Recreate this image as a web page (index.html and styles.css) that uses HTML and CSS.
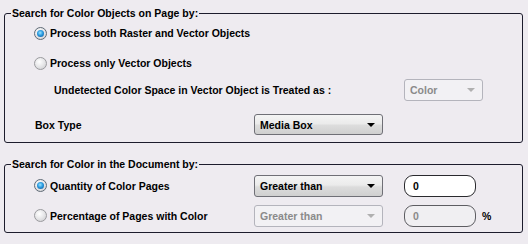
FILE: index.html
```html
<!DOCTYPE html>
<html lang="en">

<head>
    <meta charset="UTF-8">
    <title>Color Detection</title>
    <link rel="stylesheet" href="styles.css">
</head>

<body>
    <fieldset class="group group_objects">
        <legend>Search for Color Objects on Page by:</legend>
        <div class="row row1">
            <span class="radio on"></span>
            <span class="label">Process both Raster and Vector Objects</span>
        </div>
        <div class="row row2">
            <span class="radio"></span>
            <span class="label">Process only Vector Objects</span>
        </div>
        <div class="row row3">
            <span class="label sub">Undetected Color Space in Vector Object is Treated as :</span>
            <div class="select off small">
                <span>Color</span>
                <i class="arrow"></i>
            </div>
        </div>
        <div class="row row4">
            <span class="label name">Box Type</span>
            <div class="select short">
                <span>Media Box</span>
                <i class="arrow"></i>
            </div>
        </div>
    </fieldset>

    <fieldset class="group group_doc">
        <legend>Search for Color in the Document by:</legend>
        <div class="row row5">
            <span class="radio on"></span>
            <span class="label col">Quantity of Color Pages</span>
            <div class="select">
                <span>Greater than</span>
                <i class="arrow"></i>
            </div>
            <div class="input">0</div>
        </div>
        <div class="row row6">
            <span class="radio"></span>
            <span class="label col">Percentage of Pages with Color</span>
            <div class="select off">
                <span>Greater than</span>
                <i class="arrow"></i>
            </div>
            <div class="input off">0</div>
            <span class="pct">%</span>
        </div>
    </fieldset>
</body>

</html>
```

FILE: styles.css
```css
* {
    margin: 0;
    padding: 0;
    box-sizing: border-box;
}

body {
    width: 528px;
    height: 244px;
    background-color: #eeebf0;
    font-family: "Liberation Sans", Arial, sans-serif;
    font-size: 10.5px;
    font-weight: bold;
    color: #000;
    padding-top: 7px;
}

.group {
    margin: 0 5px 0 4px;
    border: 1px solid #1c1c2c;
    border-radius: 3px;
    padding: 0 0 0 29px;
    display: flex;
    flex-direction: column;
}

.group legend {
    margin-left: -23px;
    padding: 0 1px;
    line-height: 12px;
    height: 12px;
}

.group_objects {
    padding-top: 4px;
    padding-bottom: 7px;
}

.group_doc {
    margin-top: 15px;
    padding-top: 4px;
    padding-bottom: 5px;
}

.row {
    display: flex;
    align-items: center;
}

.row1,
.row2 {
    height: 20px;
}

.row2 {
    margin-top: 10px;
}

.row3 {
    height: 22px;
    margin-top: 6px;
}

.row4 {
    height: 21px;
    margin-top: 13px;
}

.row5,
.row6 {
    height: 23px;
}

.row6 {
    margin-top: 7px;
}

.radio {
    position: relative;
    width: 13px;
    height: 13px;
    border-radius: 50%;
    border: 1px solid #9a9a9e;
    background: radial-gradient(circle at 40% 35%, #ffffff 0%, #e6e6e8 50%, #c9c9cc 100%);
    margin-right: 3px;
    flex: none;
}

.radio.on {
    border-color: #5f6a76;
}

.radio.on::after {
    content: "";
    position: absolute;
    left: 2px;
    top: 2px;
    width: 7px;
    height: 7px;
    border-radius: 50%;
    background: radial-gradient(circle at 45% 40%, #9be4ff 0%, #2a9be0 45%, #0b4f8f 100%);
}

.label {
    white-space: nowrap;
}

.sub {
    width: 370px;
    padding-left: 20px;
}

.name {
    width: 220px;
    padding-left: 1px;
}

.col {
    width: 204px;
}

.select {
    display: flex;
    align-items: center;
    justify-content: space-between;
    width: 129px;
    height: 22px;
    padding: 0 7px 0 5px;
    border: 1px solid #6f6f76;
    border-radius: 3px;
    background: linear-gradient(#f4f4f4 0%, #ebebeb 45%, #dcdcdc 55%, #cfcfcf 100%);
}

.select.short {
    height: 21px;
}

.select.small {
    width: 79px;
}

.select.off {
    border-color: #b4b4bc;
    background: #f2f1f4;
    color: #8a8a8a;
}

.arrow {
    width: 0;
    height: 0;
    border-left: 4px solid transparent;
    border-right: 4px solid transparent;
    border-top: 4px solid #000;
}

.select.off .arrow {
    border-top-color: #b0b0b0;
}

.input {
    margin-left: 21px;
    width: 72px;
    height: 22px;
    padding-left: 8px;
    line-height: 20px;
    border: 1px solid #2a2a2e;
    border-radius: 9px;
    background-color: #fff;
}

.input.off {
    border-color: #5d5d62;
    background-color: #f0eff2;
    color: #8a8a8a;
}

.pct {
    margin-left: 6px;
}
```
